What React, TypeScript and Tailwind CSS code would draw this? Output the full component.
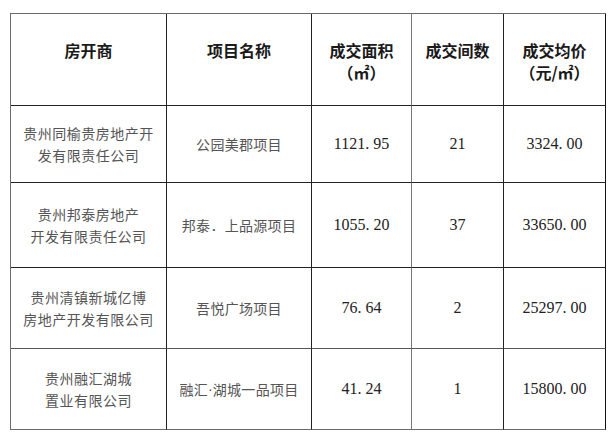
import React from "react";

const CJK = { fontFamily: '"Noto Sans CJK SC", "Noto Sans", sans-serif' };

function Num({ v }: { v: string }) {
  const parts = v.split(".");
  return (
    <span className="font-['Liberation_Serif',serif] text-[16px] text-[#222] whitespace-nowrap">
      {parts[0]}
      {parts.length > 1 && (
        <>
          <span className="inline-block w-[8px] text-left">.</span>
          {parts[1]}
        </>
      )}
    </span>
  );
}

type Row = { dev: string[]; proj: React.ReactNode; area: string; count: string; price: string; h: string };

const rows: Row[] = [
  { dev: ["贵州同榆贵房地产开", "发有限责任公司"], proj: "公园美郡项目", area: "1121.95", count: "21", price: "3324.00", h: "h-[77px]" },
  { dev: ["贵州邦泰房地产", "开发有限责任公司"], proj: "邦泰．上品源项目", area: "1055.20", count: "37", price: "33650.00", h: "h-[85px]" },
  { dev: ["贵州清镇新城亿博", "房地产开发有限公司"], proj: "吾悦广场项目", area: "76.64", count: "2", price: "25297.00", h: "h-[81px]" },
  {
    dev: ["贵州融汇湖城", "置业有限公司"],
    proj: (
      <>
        融汇<span className="font-['Liberation_Sans',sans-serif] tracking-normal">·</span>湖城一品项目
      </>
    ),
    area: "41.24",
    count: "1",
    price: "15800.00",
    h: "h-[81px]",
  },
];

export default function App() {
  return (
    <div className="w-[614px] h-[436px] bg-white overflow-hidden pt-[13px] pl-[10px]" style={CJK}>
      <div className="grid grid-cols-[156px_145px_100px_92px_102px] w-[596px] border-l border-t border-l-[#6b6b6b] border-t-[#6b6b6b]">
        {[
          ["房开商"],
          ["项目名称"],
          ["成交面积", "（㎡）"],
          ["成交间数"],
          ["成交均价", "（元/㎡）"],
        ].map((lines, i) => (
          <div
            key={i}
            className={`h-[92px] border-b border-b-[#222] border-r ${
              i === 2 ? "border-r-[#777]" : i === 4 ? "border-r-[#111]" : "border-r-[#222]"
            } pt-[25px] text-center text-[16px] font-bold leading-[22px] text-[#1a1a1a]`}
          >
            {lines.map((l, j) => (
              <div key={j}>{l}</div>
            ))}
          </div>
        ))}
        {rows.map((r, ri) => {
          const bb = ri === rows.length - 1 ? "border-b-[#6b6b6b]" : ri === 2 ? "border-b-[#555]" : "border-b-[#222]";
          const cell = `${r.h} border-b ${bb} border-r flex items-center justify-center text-center`;
          return (
            <React.Fragment key={ri}>
              <div className={`${cell} border-r-[#222] text-[14px] leading-[22px] tracking-[0.5px] text-[#555]`}>
                <div>
                  {r.dev.map((d, j) => (
                    <div key={j}>{d}</div>
                  ))}
                </div>
              </div>
              <div className={`${cell} border-r-[#222] text-[14px] leading-[22px] tracking-[0.3px] text-[#555]`}>
                {r.proj}
              </div>
              <div className={`${cell} border-r-[#777]`}>
                <Num v={r.area} />
              </div>
              <div className={`${cell} border-r-[#222]`}>
                <Num v={r.count} />
              </div>
              <div className={`${cell} border-r-[#111]`}>
                <Num v={r.price} />
              </div>
            </React.Fragment>
          );
        })}
      </div>
    </div>
  );
}
